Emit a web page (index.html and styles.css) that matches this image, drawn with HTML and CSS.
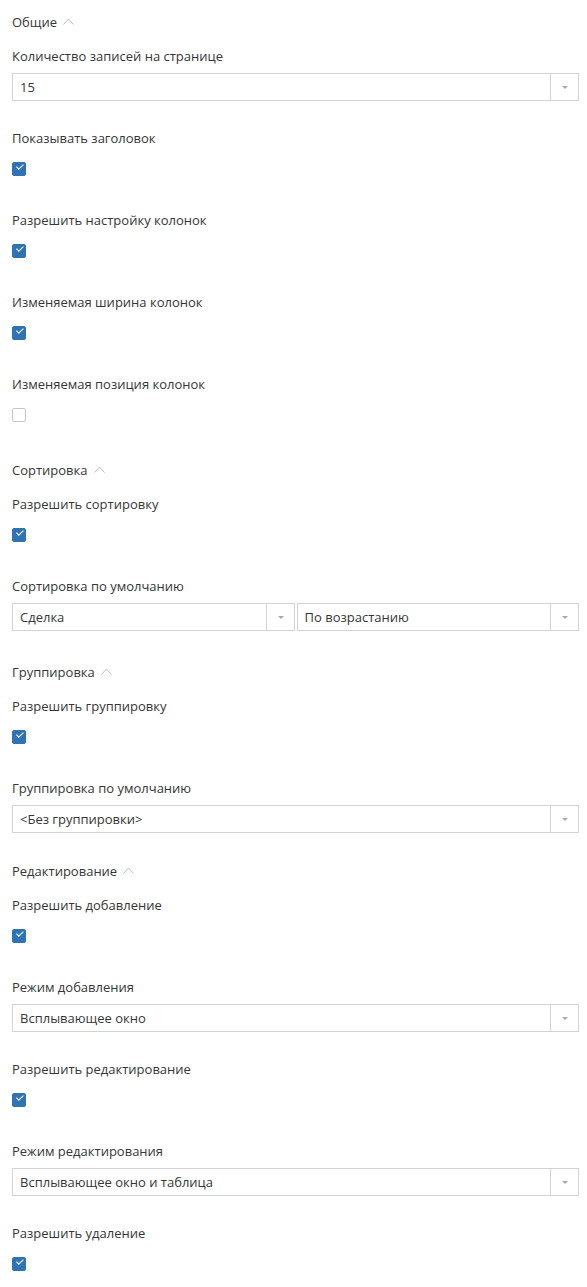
FILE: index.html
```html
<!DOCTYPE html>
<html lang="ru">
<head>
<meta charset="utf-8">
<link rel="stylesheet" href="styles.css">
</head>
<body>
<div class="page">

<section class="section">
  <div class="section-head">Общие <span class="chev"><svg width="11" height="7" viewBox="0 0 11 7"><path d="M0.5 6.5 L5.5 1 L10.5 6.5" fill="none" stroke="#bdbdbd" stroke-width="1"/></svg></span></div>
  <div class="field">
    <div class="label">Количество записей на странице</div>
    <div class="select"><span class="val">15</span><span class="btn"><i class="tri"></i></span></div>
  </div>
  <div class="field cbfield">
    <div class="label">Показывать заголовок</div>
    <span class="cb on"></span>
  </div>
  <div class="field cbfield">
    <div class="label">Разрешить настройку колонок</div>
    <span class="cb on"></span>
  </div>
  <div class="field cbfield">
    <div class="label">Изменяемая ширина колонок</div>
    <span class="cb on"></span>
  </div>
  <div class="field cbfield">
    <div class="label">Изменяемая позиция колонок</div>
    <span class="cb"></span>
  </div>
</section>

<section class="section">
  <div class="section-head">Сортировка <span class="chev"><svg width="11" height="7" viewBox="0 0 11 7"><path d="M0.5 6.5 L5.5 1 L10.5 6.5" fill="none" stroke="#bdbdbd" stroke-width="1"/></svg></span></div>
  <div class="field cbfield">
    <div class="label">Разрешить сортировку</div>
    <span class="cb on"></span>
  </div>
  <div class="field">
    <div class="label">Сортировка по умолчанию</div>
    <div class="pair">
      <div class="select"><span class="val">Сделка</span><span class="btn"><i class="tri"></i></span></div>
      <div class="select"><span class="val">По возрастанию</span><span class="btn"><i class="tri"></i></span></div>
    </div>
  </div>
</section>

<section class="section">
  <div class="section-head">Группировка <span class="chev"><svg width="11" height="7" viewBox="0 0 11 7"><path d="M0.5 6.5 L5.5 1 L10.5 6.5" fill="none" stroke="#bdbdbd" stroke-width="1"/></svg></span></div>
  <div class="field cbfield">
    <div class="label">Разрешить группировку</div>
    <span class="cb on"></span>
  </div>
  <div class="field">
    <div class="label">Группировка по умолчанию</div>
    <div class="select"><span class="val">&lt;Без группировки&gt;</span><span class="btn"><i class="tri"></i></span></div>
  </div>
</section>

<section class="section section-tight">
  <div class="section-head">Редактирование <span class="chev"><svg width="11" height="7" viewBox="0 0 11 7"><path d="M0.5 6.5 L5.5 1 L10.5 6.5" fill="none" stroke="#bdbdbd" stroke-width="1"/></svg></span></div>
  <div class="field cbfield">
    <div class="label">Разрешить добавление</div>
    <span class="cb on"></span>
  </div>
  <div class="field">
    <div class="label">Режим добавления</div>
    <div class="select"><span class="val">Всплывающее окно</span><span class="btn"><i class="tri"></i></span></div>
  </div>
  <div class="field cbfield">
    <div class="label">Разрешить редактирование</div>
    <span class="cb on"></span>
  </div>
  <div class="field">
    <div class="label">Режим редактирования</div>
    <div class="select"><span class="val">Всплывающее окно и таблица</span><span class="btn"><i class="tri"></i></span></div>
  </div>
  <div class="field cbfield">
    <div class="label">Разрешить удаление</div>
    <span class="cb on"></span>
  </div>
</section>

</div>
</body>
</html>
```

FILE: styles.css
```css
html, body {
  margin: 0;
  padding: 0;
  background: #ffffff;
}
body {
  font-family: "Open Sans", "Noto Sans", sans-serif;
  font-size: 13px;
  color: #363636;
}
.page {
  padding: 9px 8px 0 12px;
}
.section {
  padding-top: 4px;
}
.section-tight {
  padding-top: 1px;
}
.section-head {
  line-height: 18px;
  height: 18px;
  margin-bottom: 16px;
  display: flex;
  align-items: center;
}
.chev {
  display: inline-flex;
  margin-left: 6px;
  margin-top: -2px;
}
.field {
  padding-bottom: 28px;
}
.label {
  line-height: 18px;
  height: 18px;
  margin-bottom: 8px;
}
.cbfield .label {
  margin-bottom: 15px;
}
.cbfield {
  padding-bottom: 35px;
}
.cb {
  display: block;
  box-sizing: border-box;
  width: 14px;
  height: 14px;
  border: 1px solid #c6c6c6;
  border-radius: 2px;
  background: #fff;
  position: relative;
}
.cb.on {
  background: #2f73b2;
  border-color: #2f73b2;
}
.cb.on::after {
  content: "";
  position: absolute;
  left: 4px;
  top: 1px;
  width: 6px;
  height: 3px;
  border-left: 1.3px solid #fff;
  border-bottom: 1.3px solid #fff;
  transform: translate(-1px, 3px) rotate(-45deg);
  transform-origin: left top;
}
.select {
  box-sizing: border-box;
  height: 28px;
  border: 1px solid #d3d3d3;
  display: flex;
  align-items: stretch;
  background: #fff;
}
.val {
  flex: 1;
  padding-left: 7px;
  line-height: 26px;
  white-space: nowrap;
  overflow: hidden;
}
.btn {
  width: 27px;
  border-left: 1px solid #d3d3d3;
  display: flex;
  align-items: center;
  justify-content: center;
}
.tri {
  display: block;
  width: 0;
  height: 0;
  border-left: 3.5px solid transparent;
  border-right: 3.5px solid transparent;
  border-top: 3.5px solid #a8a8a8;
  margin-left: 1px;
}
.pair {
  display: grid;
  grid-template-columns: 1fr 1fr;
  column-gap: 2px;
}
```
